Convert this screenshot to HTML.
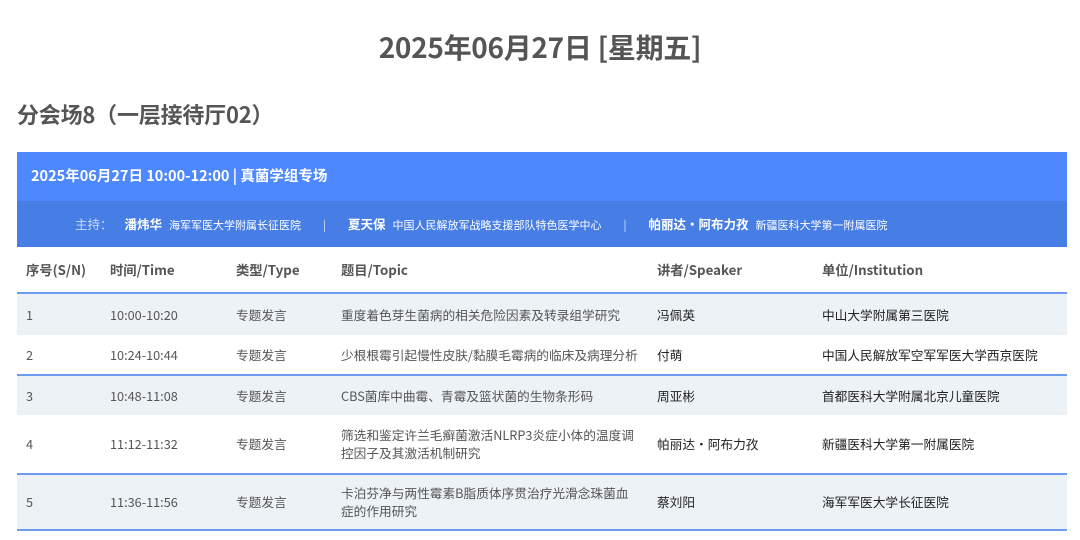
<!DOCTYPE html>
<html><head><meta charset="utf-8"><style>
*{margin:0;padding:0;box-sizing:border-box}
body{width:1080px;height:540px;background:#fff;font-family:"Noto Sans CJK SC",sans-serif;color:#555;position:relative;overflow:hidden}
.t1{position:absolute;left:0;width:1080px;top:27px;text-align:center;font-size:28px;font-weight:bold;color:#555;letter-spacing:-0.3px}
.t2{position:absolute;left:17px;top:98px;font-size:22px;font-weight:bold;color:#555;letter-spacing:-0.2px}
.hb{position:absolute;left:17px;top:152px;width:1050px;height:49px;background:#4d88ff;color:#fff;font-weight:bold;font-size:14.5px;padding:14px 0 0 14px;line-height:20px}
.hs{position:absolute;left:17px;top:201px;width:1050px;height:46px;background:#477ee6;color:#fff;font-size:11px;padding:14px 0 0 58px;line-height:18px;white-space:nowrap}
.hs .l{color:#c9dafc;font-size:12.5px;margin-right:12px}
.hs b{font-size:12.5px;margin-right:7px}
.hs .sep{color:#dfe8ff;margin:0 22px}
.row{position:absolute;left:17px;width:1050px;font-size:12.7px;color:#555}
.row span{position:absolute;line-height:18px}
.hd{font-weight:bold;font-size:13.3px}
.g{background:#ecf2f6}
.bb{border-bottom:2px solid #6d9bf2}
.k{color:#222}
</style></head><body>
<div class="t1">2025年06月27日 [星期五]</div>
<div class="t2">分会场8（一层接待厅02）</div>
<div class="hb">2025年06月27日 10:00-12:00 | 真菌学组专场</div>
<div class="hs"><span class="l">主持：</span><b>潘炜华</b>海军军医大学附属长征医院<span class="sep">|</span><b>夏天保</b>中国人民解放军战略支援部队特色医学中心<span class="sep">|</span><b>帕丽达·阿布力孜</b>新疆医科大学第一附属医院</div>

<div class="row hd bb" style="top:247px;height:47px">
<span style="left:9px;top:14px">序号(S/N)</span><span style="left:93px;top:14px">时间/Time</span><span style="left:219px;top:14px">类型/Type</span><span style="left:324px;top:14px">题目/Topic</span><span style="left:640px;top:14px">讲者/Speaker</span><span style="left:805px;top:14px">单位/Institution</span></div>

<div class="row g" style="top:294px;height:41px">
<span style="left:9px;top:12px">1</span><span style="left:93px;top:12px">10:00-10:20</span><span style="left:219px;top:12px">专题发言</span><span style="left:324px;top:12px">重度着色芽生菌病的相关危险因素及转录组学研究</span><span class="k" style="left:640px;top:12px">冯佩英</span><span class="k" style="left:805px;top:12px">中山大学附属第三医院</span></div>

<div class="row bb" style="top:335px;height:41px">
<span style="left:9px;top:11px">2</span><span style="left:93px;top:11px">10:24-10:44</span><span style="left:219px;top:11px">专题发言</span><span style="left:324px;top:11px">少根根霉引起慢性皮肤/黏膜毛霉病的临床及病理分析</span><span class="k" style="left:640px;top:11px">付萌</span><span class="k" style="left:805px;top:11px">中国人民解放军空军军医大学西京医院</span></div>

<div class="row g" style="top:376px;height:39px">
<span style="left:9px;top:11px">3</span><span style="left:93px;top:11px">10:48-11:08</span><span style="left:219px;top:11px">专题发言</span><span style="left:324px;top:11px">CBS菌库中曲霉、青霉及篮状菌的生物条形码</span><span class="k" style="left:640px;top:11px">周亚彬</span><span class="k" style="left:805px;top:11px">首都医科大学附属北京儿童医院</span></div>

<div class="row bb" style="top:415px;height:60px">
<span style="left:9px;top:20px">4</span><span style="left:93px;top:20px">11:12-11:32</span><span style="left:219px;top:20px">专题发言</span><span style="left:324px;top:11px">筛选和鉴定许兰毛癣菌激活NLRP3炎症小体的温度调<br>控因子及其激活机制研究</span><span class="k" style="left:640px;top:20px">帕丽达·阿布力孜</span><span class="k" style="left:805px;top:20px">新疆医科大学第一附属医院</span></div>

<div class="row g bb" style="top:475px;height:56px">
<span style="left:9px;top:18px">5</span><span style="left:93px;top:18px">11:36-11:56</span><span style="left:219px;top:18px">专题发言</span><span style="left:324px;top:9px">卡泊芬净与两性霉素B脂质体序贯治疗光滑念珠菌血<br>症的作用研究</span><span class="k" style="left:640px;top:18px">蔡刘阳</span><span class="k" style="left:805px;top:18px">海军军医大学长征医院</span></div>
</body></html>
